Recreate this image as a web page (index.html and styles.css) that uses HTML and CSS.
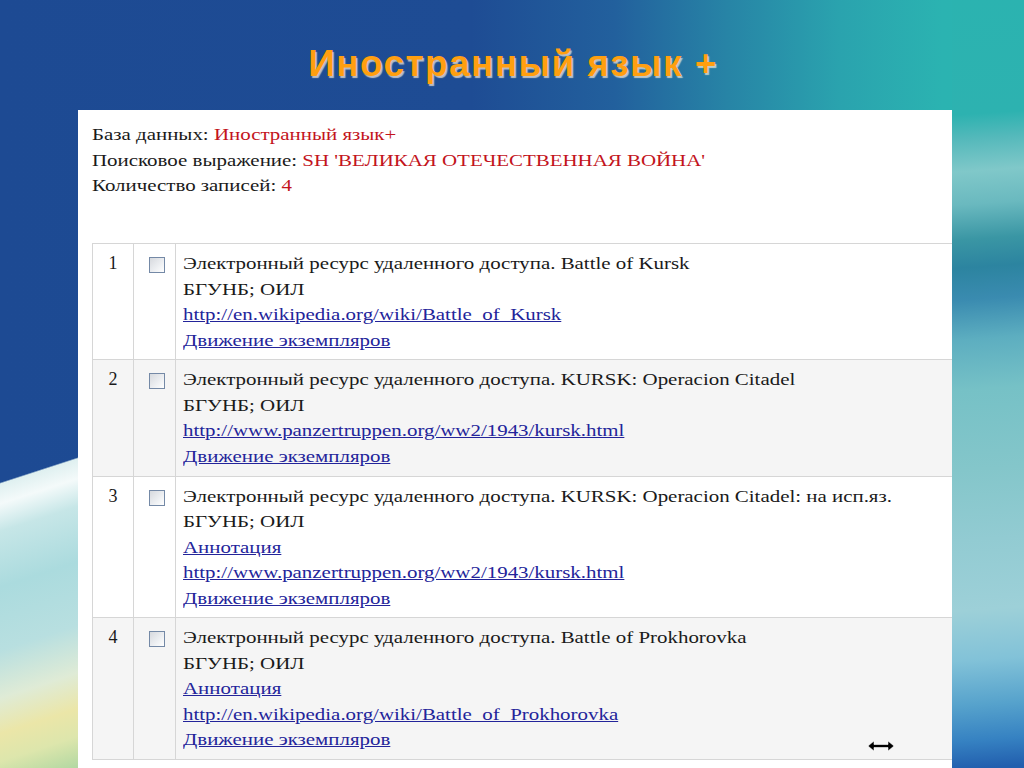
FILE: index.html
```html
<!DOCTYPE html>
<html lang="ru">
<head>
<meta charset="utf-8">
<title>Иностранный язык +</title>
<link rel="stylesheet" href="styles.css">
</head>
<body>
<div class="slide">
  <header class="head">
    <h1 class="title">Иностранный язык +</h1>
  </header>
  <main class="panel">
    <div class="info">
      <div class="ln">База данных: <span class="red">Иностранный язык+</span></div>
      <div class="ln">Поисковое выражение: <span class="red">SH 'ВЕЛИКАЯ ОТЕЧЕСТВЕННАЯ ВОЙНА'</span></div>
      <div class="ln">Количество записей: <span class="red">4</span></div>
    </div>
    <table class="results">
      <tr class="row">
        <td class="num">1</td>
        <td class="chk"><span class="box"></span></td>
        <td class="desc">
          <div class="ln">Электронный ресурс удаленного доступа. Battle of Kursk</div>
          <div class="ln">БГУНБ; ОИЛ</div>
          <div class="ln"><a href="#">http://en.wikipedia.org/wiki/Battle_of_Kursk</a></div>
          <div class="ln"><a href="#">Движение экземпляров</a></div>
        </td>
      </tr>
      <tr class="row alt">
        <td class="num">2</td>
        <td class="chk"><span class="box"></span></td>
        <td class="desc">
          <div class="ln">Электронный ресурс удаленного доступа. KURSK: Operacion Citadel</div>
          <div class="ln">БГУНБ; ОИЛ</div>
          <div class="ln"><a href="#">http://www.panzertruppen.org/ww2/1943/kursk.html</a></div>
          <div class="ln"><a href="#">Движение экземпляров</a></div>
        </td>
      </tr>
      <tr class="row">
        <td class="num">3</td>
        <td class="chk"><span class="box"></span></td>
        <td class="desc">
          <div class="ln">Электронный ресурс удаленного доступа. KURSK: Operacion Citadel: на исп.яз.</div>
          <div class="ln">БГУНБ; ОИЛ</div>
          <div class="ln"><a href="#">Аннотация</a></div>
          <div class="ln"><a href="#">http://www.panzertruppen.org/ww2/1943/kursk.html</a></div>
          <div class="ln"><a href="#">Движение экземпляров</a></div>
        </td>
      </tr>
      <tr class="row alt">
        <td class="num">4</td>
        <td class="chk"><span class="box"></span></td>
        <td class="desc">
          <div class="ln">Электронный ресурс удаленного доступа. Battle of Prokhorovka</div>
          <div class="ln">БГУНБ; ОИЛ</div>
          <div class="ln"><a href="#">Аннотация</a></div>
          <div class="ln"><a href="#">http://en.wikipedia.org/wiki/Battle_of_Prokhorovka</a></div>
          <div class="ln"><a href="#">Движение экземпляров</a></div>
        </td>
      </tr>
    </table>
  </main>
  <svg class="cursor" width="28" height="12" viewBox="0 0 28 12" aria-hidden="true">
    <path d="M1 6 L7 1 L7 4.5 L21 4.5 L21 1 L27 6 L21 11 L21 7.5 L7 7.5 L7 11 Z" fill="#000" stroke="#fff" stroke-width="0.6"/>
  </svg>
</div>
</body>
</html>
```

FILE: styles.css
```css
html, body {
  margin: 0;
  padding: 0;
}

body {
  width: 1024px;
  height: 768px;
  overflow: hidden;
  background:
    linear-gradient(162deg, rgba(255,255,255,0) 0, rgba(255,255,255,0) 60.8%, #dff0f0 61%, #f4fafa 63.5%, #c6e6e7 67%, #abdbde 74%, #b8dfe0 82%, #dfebd6 88%, #ebe6a8 92.5%, #dde6ac 96%, #b2d8a2 100%) left top / 78px 768px no-repeat,
    linear-gradient(176deg, #2bb3b0 0, #2db2b0 115px, #55b9bb 140px, #80c8c9 172px, #6ab9bf 205px, #3a96a4 240px, #2c84a0 268px, #3a8bb0 300px, #5daec0 340px, #76c1c6 390px, #84c6ca 470px, #92cbd2 540px, #9dd0d8 610px, #82c2d8 660px, #56a2cc 705px, #3682c2 740px, #225fae 768px) right top / 72px 768px no-repeat,
    linear-gradient(90deg, #1d4a93 0%, #1e4c94 46%, #22609d 60%, #2784a6 71%, #2aa3ae 82%, #2bb3b1 92%, #2bb5b1 100%);
  font-family: "Liberation Serif", "Times New Roman", serif;
  color: #1a1a1a;
}

.slide {
  position: relative;
  width: 1024px;
  height: 768px;
  display: flex;
  flex-direction: column;
}

.head {
  height: 110px;
  box-sizing: border-box;
  padding-top: 45px;
  display: flex;
  justify-content: center;
}

.title {
  margin: 0;
  font-family: "Liberation Sans", Arial, sans-serif;
  font-weight: bold;
  font-size: 37px;
  line-height: 37px;
  letter-spacing: 1.4px;
  color: #ff9f10;
  text-shadow: 1.5px 1.5px 1px rgba(255, 240, 215, 0.7);
  padding-left: 2px;
}

.panel {
  flex: 1;
  margin: 0 72px 0 78px;
  background: #ffffff;
  overflow: hidden;
  padding: 12px 0 0 14px;
  box-sizing: border-box;
}

.ln {
  height: 25.55px;
  line-height: 25.55px;
  font-size: 17px;
  white-space: nowrap;
  transform: scaleX(1.23);
  transform-origin: 0 50%;
}

.info {
  margin-bottom: 44.5px;
}

.red {
  color: #c3141c;
}

.results {
  border-collapse: collapse;
  width: 900px;
}

.results td {
  border: 1px solid #d6d6d6;
  vertical-align: top;
  padding: 7px 7px 6px;
}

.row.alt td {
  background: #f5f5f5;
}

.num {
  width: 26px;
  text-align: center;
  font-size: 18px;
  line-height: 25.55px;
}

.chk {
  width: 27px;
}

.box {
  display: block;
  width: 14px;
  height: 14px;
  margin: 6px 0 0 8px;
  border: 1px solid #7489a6;
  background: linear-gradient(135deg, #d6d9de 0%, #eceef1 55%, #ffffff 100%);
}

.desc a {
  color: #23249a;
  text-decoration: underline;
}

.cursor {
  position: absolute;
  left: 867px;
  top: 740px;
}
```
